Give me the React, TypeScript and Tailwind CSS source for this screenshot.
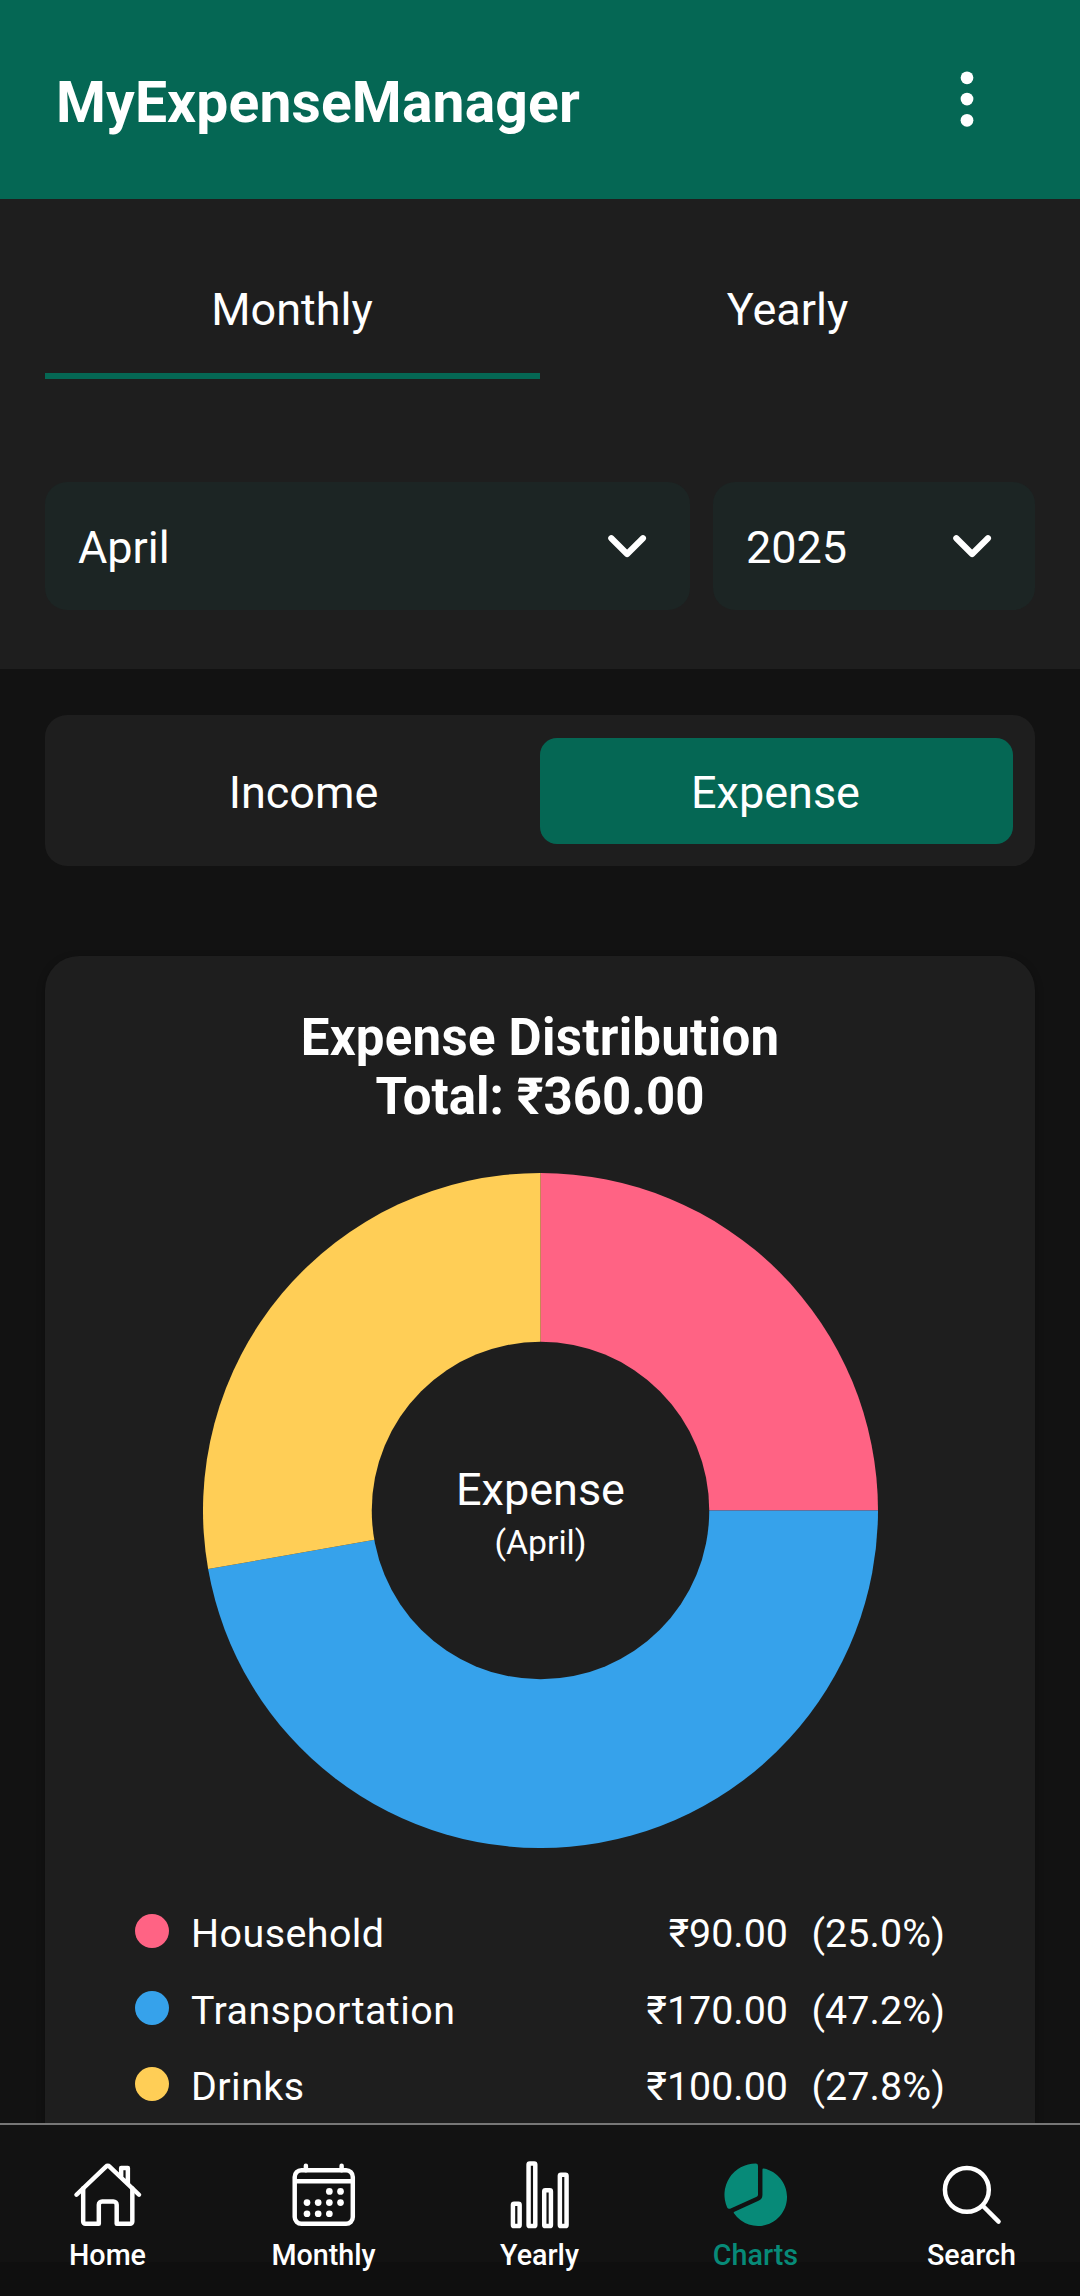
import React from "react";
import {
  IoCalendarOutline,
  IoChevronDown,
  IoEllipsisVertical,
  IoHomeOutline,
  IoPieChart,
  IoSearchOutline,
  IoStatsChartOutline,
} from "react-icons/io5";

const slices = [
  { name: "Household", amount: "₹90.00", share: "(25.0%)", value: 90, fill: "fill-[#ff6384]", dot: "bg-[#ff6384]" },
  { name: "Transportation", amount: "₹170.00", share: "(47.2%)", value: 170, fill: "fill-[#36a2eb]", dot: "bg-[#36a2eb]" },
  { name: "Drinks", amount: "₹100.00", share: "(27.8%)", value: 100, fill: "fill-[#ffce56]", dot: "bg-[#ffce56]" },
];

const navItems = [
  { label: "Home", Icon: IoHomeOutline, active: false },
  { label: "Monthly", Icon: IoCalendarOutline, active: false },
  { label: "Yearly", Icon: IoStatsChartOutline, active: false },
  { label: "Charts", Icon: IoPieChart, active: true },
  { label: "Search", Icon: IoSearchOutline, active: false },
];

const RADIUS = 337.5;

function point(fraction: number) {
  const angle = fraction * Math.PI * 2 - Math.PI / 2;
  return `${RADIUS + RADIUS * Math.cos(angle)} ${RADIUS + RADIUS * Math.sin(angle)}`;
}

function Donut() {
  const total = slices.reduce((sum, s) => sum + s.value, 0);
  let start = 0;
  return (
    <svg viewBox="0 0 675 675" className="size-[675px]">
      {slices.map((s) => {
        const from = start / total;
        start += s.value;
        const to = start / total;
        return (
          <path
            key={s.name}
            className={s.fill}
            d={`M${RADIUS} ${RADIUS}L${point(from)}A${RADIUS} ${RADIUS} 0 ${to - from > 0.5 ? 1 : 0} 1 ${point(to)}Z`}
          />
        );
      })}
      <circle cx={RADIUS} cy={RADIUS} r="168.75" className="fill-[#1e1e1e]" />
    </svg>
  );
}

function Select({ value, className }: { value: string; className: string }) {
  return (
    <button className={`flex h-32 items-center justify-between rounded-[22px] bg-[#1c2524] pr-[35px] pl-[33px] ${className}`}>
      <span className="pt-0.5">{value}</span>
      <IoChevronDown className="size-[56.25px] [&_path]:[stroke-width:56px]" />
    </button>
  );
}

export default function App() {
  return (
    <div className="flex h-[2296px] w-[1080px] flex-col overflow-hidden bg-[#121212] font-[Roboto,sans-serif] text-[45px] leading-[53px] text-white">
      <header className="flex h-[199px] shrink-0 items-center justify-between bg-[#056754] pr-[79px] pl-14">
        <h1 className="pt-[6px] text-[57px] leading-[66px] font-bold tracking-[0.15px]">MyExpenseManager</h1>
        <IoEllipsisVertical className="mb-px size-[68px]" />
      </header>

      <main className="flex min-h-0 flex-1 flex-col overflow-hidden">
        <section className="h-[470px] shrink-0 bg-[#1e1e1e] px-[45px] pt-[45px]">
          <div className="grid h-[135px] grid-cols-2 text-center">
            <button className="border-b-[6px] border-[#056754] pt-px pr-px">Monthly</button>
            <button className="border-b-[6px] border-transparent pt-px">Yearly</button>
          </div>
          <div className="mt-[103px] flex gap-[23px]">
            <Select value="April" className="w-[645px]" />
            <Select value="2025" className="w-[322px]" />
          </div>
        </section>

        <div className="mx-[45px] mt-[46px] grid h-[151px] shrink-0 grid-cols-2 rounded-[22px] bg-[#1e1e1e] px-[22px] pt-[23px] pb-[22px]">
          <button className="pt-[3px]">Income</button>
          <button className="rounded-[17px] bg-[#056754] pt-[3px] pr-[2px]">Expense</button>
        </div>

        <section className="mx-[45px] mt-[90px] h-[1300px] shrink-0 rounded-[34px] bg-[#1e1e1e] px-[90px] pt-[52px] shadow-[0_3px_8px_rgba(0,0,0,0.3)]">
          <h2 className="text-center text-[51px] leading-[59px] font-bold">
            <span className="block tracking-[0.25px]">Expense Distribution</span>
            <span className="block">Total: ₹360.00</span>
          </h2>
          <div className="mt-[47px] grid place-items-center *:col-start-1 *:row-start-1">
            <Donut />
            <div className="z-10 pt-[10px] pl-px text-center">
              <p>Expense</p>
              <p className="text-[33.75px] leading-[53px]">(April)</p>
            </div>
          </div>
          <ul className="mt-[60px] text-[39.4px] leading-[46px]">
            {slices.map((s) => (
              <li key={s.name} className="flex h-[76.5px] items-start">
                <i className={`mt-[6px] mr-[22px] size-[34px] rounded-full ${s.dot}`} />
                <span className="mt-[3px] flex-1 tracking-[0.45px]">{s.name}</span>
                <span className="mt-[3px]">{s.amount}</span>
                <span className="mt-[3px] w-[157px] text-right tracking-[0.1px]">{s.share}</span>
              </li>
            ))}
          </ul>
        </section>
      </main>

      <nav className="grid h-[173px] shrink-0 grid-cols-5 border-t-2 border-[#777777] bg-[linear-gradient(#121212_137px,#0f0f0f_137px)] text-[28.7px] leading-[34px] font-medium">
        {navItems.map(({ label, Icon, active }) => (
          <button key={label} className={`flex flex-col items-center pt-[34px] pr-px ${active ? "text-[#078a78]" : "text-white"}`}>
            <Icon className="size-[71.5px]" />
            <span className="mt-[7px]">{label}</span>
          </button>
        ))}
      </nav>
    </div>
  );
}
